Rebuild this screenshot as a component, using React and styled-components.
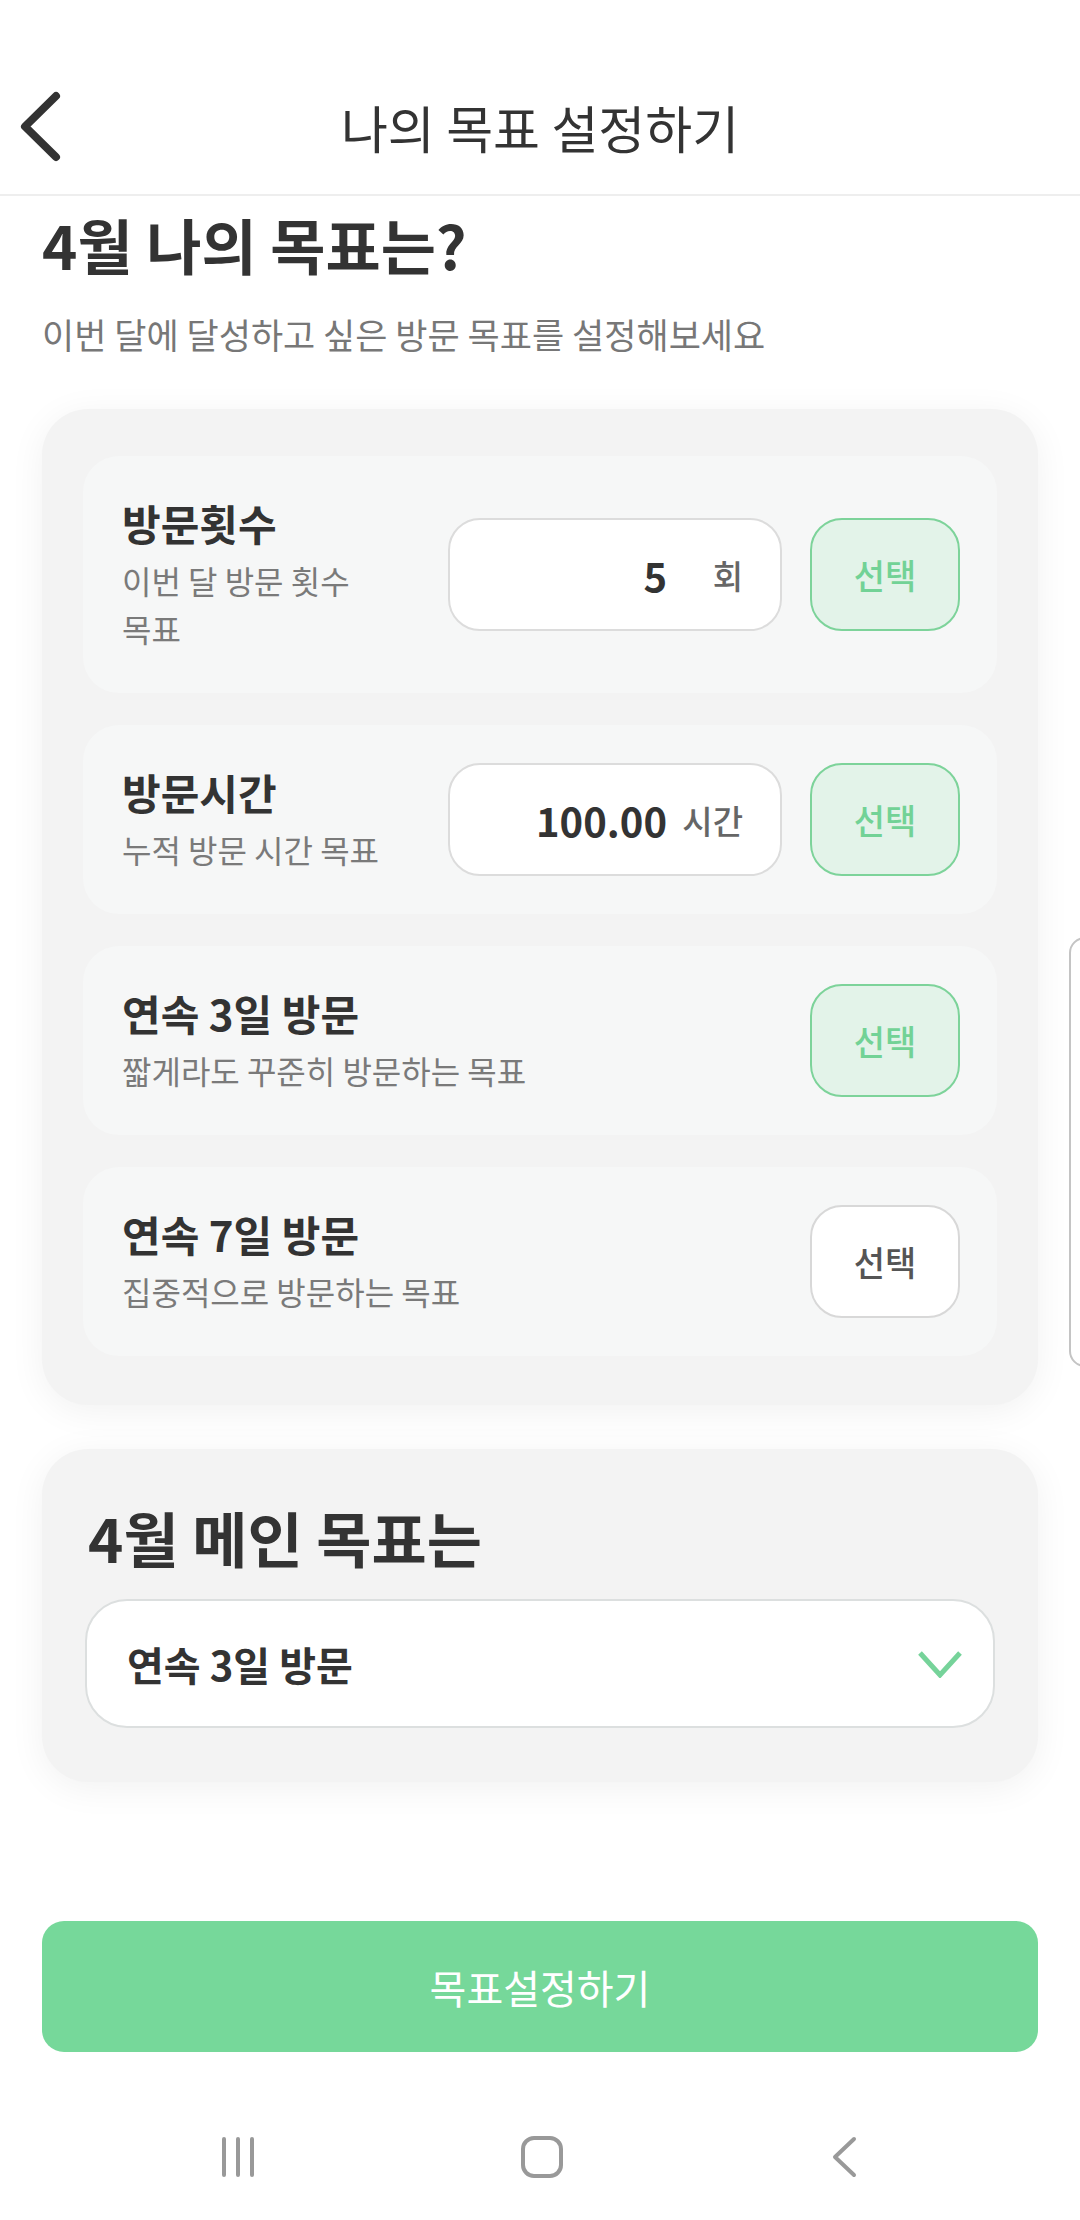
import React from "react";
import styled, { createGlobalStyle } from "styled-components";

const GlobalStyle = createGlobalStyle`
  * { box-sizing: border-box; }
  body {
    margin: 0;
    background: #ffffff;
    font-family: "Noto Sans CJK KR", "Noto Sans", sans-serif;
    color: #333333;
  }
`;

const goals = [
  { title: "방문횟수", desc: "이번 달 방문 횟수 목표", value: "5", unit: "회", active: true },
  { title: "방문시간", desc: "누적 방문 시간 목표", value: "100.00", unit: "시간", active: true },
  { title: "연속 3일 방문", desc: "짧게라도 꾸준히 방문하는 목표", active: true },
  { title: "연속 7일 방문", desc: "집중적으로 방문하는 목표", active: false },
];

function BackIcon() {
  return (
    <svg width="44" height="72" viewBox="0 0 44 72" fill="none">
      <path d="M36 5 L5 35.5 L36 66" stroke="#333" strokeWidth="8" strokeLinecap="round" strokeLinejoin="round" />
    </svg>
  );
}

function ChevronDown() {
  return (
    <svg width="46" height="28" viewBox="0 0 46 28" fill="none">
      <path d="M3 3 L23 25 L43 3" stroke="#76d39a" strokeWidth="5" />
    </svg>
  );
}

function App() {
  return (
    <Page>
      <GlobalStyle />
      <Header>
        <BackButton>
          <BackIcon />
        </BackButton>
        <HeaderTitle>나의 목표 설정하기</HeaderTitle>
        <span />
      </Header>

      <Content>
        <Heading>4월 나의 목표는?</Heading>
        <Subtitle>이번 달에 달성하고 싶은 방문 목표를 설정해보세요</Subtitle>

        <Panel>
          <GoalList>
            {goals.map((g) => (
              <GoalItem key={g.title}>
                <GoalText>
                  <GoalTitle>{g.title}</GoalTitle>
                  <GoalDesc $narrow={Boolean(g.value)}>{g.desc}</GoalDesc>
                </GoalText>
                {g.value && (
                  <ValueBox>
                    <Value>{g.value}</Value>
                    <Unit>{g.unit}</Unit>
                  </ValueBox>
                )}
                <SelectButton $active={g.active}>선택</SelectButton>
              </GoalItem>
            ))}
          </GoalList>
        </Panel>

        <MainPanel>
          <PanelHeading>4월 메인 목표는</PanelHeading>
          <Dropdown>
            <span>연속 3일 방문</span>
            <ChevronDown />
          </Dropdown>
        </MainPanel>
      </Content>

      <PeekCard />

      <Footer>
        <SubmitButton>목표설정하기</SubmitButton>
      </Footer>

      <NavBar>
        <NavSlot>
          <svg width="40" height="42" viewBox="0 0 40 42" fill="none">
            <path d="M4 3 V39 M18 3 V39 M32 3 V39" stroke="#999" strokeWidth="4" strokeLinecap="round" />
          </svg>
        </NavSlot>
        <NavSlot>
          <svg width="44" height="44" viewBox="0 0 44 44" fill="none">
            <rect x="3" y="3" width="38" height="38" rx="11" stroke="#999" strokeWidth="4" />
          </svg>
        </NavSlot>
        <NavSlot>
          <svg width="28" height="42" viewBox="0 0 28 42" fill="none">
            <path d="M24 3 L5 21 L24 39" stroke="#999" strokeWidth="4" strokeLinecap="round" strokeLinejoin="round" />
          </svg>
        </NavSlot>
      </NavBar>
    </Page>
  );
}

const Page = styled.div`
  position: relative;
  width: 1080px;
  height: 2220px;
  display: flex;
  flex-direction: column;
  overflow: hidden;
  background: #ffffff;
`;

const Header = styled.header`
  height: 196px;
  padding-top: 60px;
  display: grid;
  grid-template-columns: 120px 1fr 120px;
  align-items: center;
  border-bottom: 2px solid #eeeeee;
`;

const BackButton = styled.div`
  display: flex;
  align-items: center;
  padding-left: 20px;
`;

const HeaderTitle = styled.h1`
  margin: 0;
  text-align: center;
  font-size: 51px;
  font-weight: 400;
  color: #333333;
`;

const Content = styled.main`
  padding: 12px 42px 0;
  display: flex;
  flex-direction: column;
`;

const Heading = styled.h2`
  margin: 0;
  font-size: 60px;
  line-height: 72px;
  font-weight: 700;
  color: #333333;
`;

const Subtitle = styled.p`
  margin: 31px 0 0;
  font-size: 35px;
  line-height: 46px;
  color: #777777;
`;

const Panel = styled.section`
  margin-top: 52px;
  background: #f3f3f3;
  border-radius: 46px;
  padding: 47px 41px 49px;
  box-shadow: 0 6px 36px rgba(0, 0, 0, 0.06);
`;

const GoalList = styled.div`
  display: flex;
  flex-direction: column;
  gap: 32px;
`;

const GoalItem = styled.div`
  display: flex;
  align-items: center;
  background: #f6f7f7;
  border-radius: 36px;
  padding: 38px 37px 38px 39px;
  min-height: 189px;
`;

const GoalText = styled.div`
  flex: 1;
  min-width: 0;
  padding: 3px 0;
`;

const GoalTitle = styled.div`
  font-size: 42px;
  line-height: 52px;
  font-weight: 700;
  color: #333333;
`;

const GoalDesc = styled.div`
  margin-top: 7px;
  max-width: ${({ $narrow }) => ($narrow ? "272px" : "none")};
  font-size: 32px;
  line-height: 48px;
  color: #7a7a7a;
  word-break: keep-all;
`;

const ValueBox = styled.div`
  width: 334px;
  height: 113px;
  display: flex;
  align-items: center;
  background: #ffffff;
  border: 2px solid #dcdcdc;
  border-radius: 32px;
  padding-right: 37px;
  margin-right: 28px;
`;

const Value = styled.span`
  flex: 1;
  text-align: right;
  font-size: 40px;
  font-weight: 700;
  color: #333333;
`;

const Unit = styled.span`
  width: 76px;
  text-align: right;
  font-size: 33px;
  font-weight: 500;
  color: #666666;
`;

const SelectButton = styled.div`
  width: 150px;
  height: 113px;
  flex-shrink: 0;
  display: flex;
  align-items: center;
  justify-content: center;
  border-radius: 32px;
  font-size: 34px;
  font-weight: 500;
  border: 2px solid ${({ $active }) => ($active ? "#7dd39a" : "#d8d8d8")};
  background: ${({ $active }) => ($active ? "#e3f3e9" : "#ffffff")};
  color: ${({ $active }) => ($active ? "#72d296" : "#555555")};
`;

const MainPanel = styled.section`
  margin-top: 44px;
  background: #f3f3f3;
  border-radius: 46px;
  padding: 52px 43px 54px 43px;
  box-shadow: 0 6px 36px rgba(0, 0, 0, 0.06);
`;

const PanelHeading = styled.h3`
  margin: 0 0 0 3px;
  font-size: 60px;
  line-height: 72px;
  font-weight: 700;
  color: #333333;
`;

const Dropdown = styled.div`
  margin-top: 26px;
  height: 129px;
  display: flex;
  align-items: center;
  justify-content: space-between;
  background: #ffffff;
  border: 2px solid #dcdfdf;
  border-radius: 42px;
  padding: 0 30px 0 40px;
  font-size: 40px;
  font-weight: 700;
  color: #333333;
`;

const PeekCard = styled.div`
  position: absolute;
  left: 1069px;
  top: 937px;
  width: 60px;
  height: 430px;
  border: 2px solid #c4c4c4;
  border-radius: 16px;
  background: #ffffff;
`;

const Footer = styled.div`
  margin-top: auto;
  padding: 0 42px 42px;
`;

const SubmitButton = styled.button`
  width: 100%;
  height: 131px;
  border: none;
  border-radius: 22px;
  background: #76d89a;
  color: #ffffff;
  font-family: inherit;
  font-size: 40px;
  font-weight: 400;
`;

const NavBar = styled.nav`
  height: 126px;
  display: flex;
  justify-content: center;
  align-items: center;
  padding-left: 4px;
`;

const NavSlot = styled.div`
  width: 302px;
  display: flex;
  justify-content: center;
  align-items: center;
`;

export default App;
